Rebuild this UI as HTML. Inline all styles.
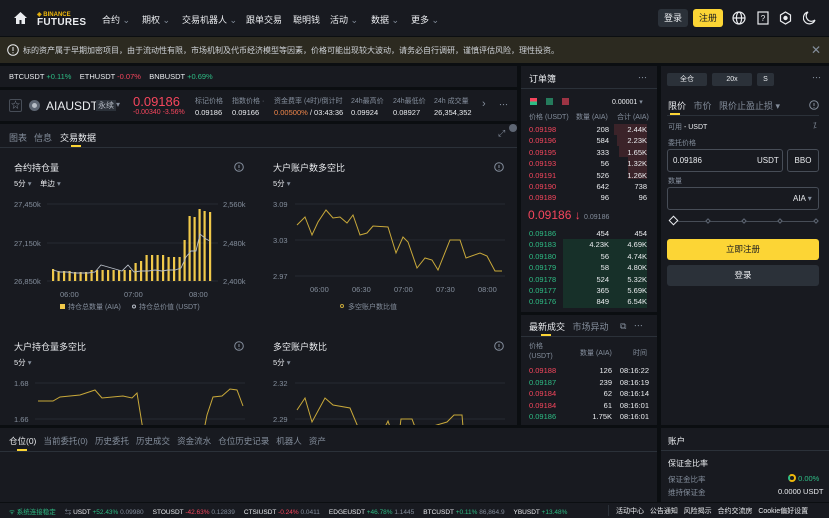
<!DOCTYPE html><html><head><meta charset="utf-8"><style>
*{margin:0;padding:0;box-sizing:border-box}
body{width:829px;height:518px;overflow:hidden;background:#0b0e11;font-family:"Liberation Sans","Noto Sans CJK SC",sans-serif;color:#eaecef;font-size:9px;position:relative}
.a{position:absolute}
.p{position:absolute;background:#181a20}
.g{color:#848e9c}.r{color:#f6465d}.gr{color:#2ebd85}.w{color:#eaecef}
.t{white-space:nowrap}
</style></head><body>
<!-- header -->
<div class="p" style="left:0;top:0;width:829px;height:36px;background:#181a20"></div>
<svg class="a" style="left:14px;top:12px" width="13" height="12" viewBox="0 0 13 12"><path d="M6.5 0L0 6h2v6h3.5V8h2v4H11V6h2z" fill="#eaecef"/></svg>
<div class="a t" style="left:37px;top:11px;font-size:6px;color:#f0b90b;font-weight:bold">◈ BINANCE</div>
<div class="a t" style="left:37px;top:17px;font-size:10px;color:#eaecef;font-weight:bold;letter-spacing:.3px">FUTURES</div>
<div class="a t" style="left:102px;top:13px;font-size:9px">合约 <span class="g">⌄</span></div>
<div class="a t" style="left:142px;top:13px;font-size:9px">期权 <span class="g">⌄</span></div>
<div class="a t" style="left:182px;top:13px;font-size:9px">交易机器人 <span class="g">⌄</span></div>
<div class="a t" style="left:246px;top:13px;font-size:9px">跟单交易</div>
<div class="a t" style="left:293px;top:13px;font-size:9px">聪明钱</div>
<div class="a t" style="left:330px;top:13px;font-size:9px">活动 <span class="g">⌄</span></div>
<div class="a t" style="left:371px;top:13px;font-size:9px">数据 <span class="g">⌄</span></div>
<div class="a t" style="left:411px;top:13px;font-size:9px">更多 <span class="g">⌄</span></div>
<div class="a" style="left:658px;top:9px;width:30px;height:18px;background:#2b3139;border-radius:3px;font-size:9px;text-align:center;line-height:18px">登录</div>
<div class="a" style="left:693px;top:9px;width:30px;height:18px;background:#fcd535;border-radius:3px;font-size:9px;color:#181a20;text-align:center;line-height:18px">注册</div>
<svg class="a" style="left:732px;top:11px" width="14" height="14" viewBox="0 0 14 14" fill="none" stroke="#eaecef" stroke-width="1.2"><circle cx="7" cy="7" r="6"/><ellipse cx="7" cy="7" rx="2.6" ry="6"/><path d="M1 7h12"/></svg>
<svg class="a" style="left:757px;top:11px" width="12" height="14" viewBox="0 0 12 14" fill="none" stroke="#eaecef" stroke-width="1.2"><rect x="1" y="1" width="10" height="12"/><text x="6" y="10" font-size="8" fill="#eaecef" stroke="none" text-anchor="middle">?</text></svg>
<svg class="a" style="left:779px;top:11px" width="13" height="14" viewBox="0 0 13 14" fill="none" stroke="#eaecef" stroke-width="1.2"><path d="M6.5 1l5 3v6l-5 3-5-3V4z"/><circle cx="6.5" cy="7" r="1.6" fill="#eaecef"/></svg>
<svg class="a" style="left:803px;top:11px" width="13" height="14" viewBox="0 0 13 14" fill="none" stroke="#eaecef" stroke-width="1.2"><path d="M5 1a6 6 0 1 0 7 8A5 5 0 0 1 5 1z"/></svg>
<!-- notice -->
<div class="a" style="left:0;top:37px;width:829px;height:26px;background:#2c2a20"></div>
<svg class="a" style="left:7px;top:44px" width="12" height="12" viewBox="0 0 12 12" fill="none" stroke="#eaecef" stroke-width="1"><circle cx="6" cy="6" r="5.3"/><path d="M6 3v4M6 8.3v.9"/></svg>
<div class="a t" style="left:23px;top:45px;font-size:8px;color:#cfd3d8">标的资产属于早期加密项目，由于流动性有限，市场机制及代币经济模型等因素，价格可能出现较大波动，请务必自行调研，谨慎评估风险，理性投资。</div>
<div class="a t g" style="left:811px;top:43px;font-size:12px">✕</div>
<!-- ticker row -->
<div class="p" style="left:0;top:66px;width:517px;height:21px"></div>
<div class="a t" style="left:9px;top:72px;font-size:7.5px">BTCUSDT <span class="gr">+0.11%</span>&nbsp;&nbsp;&nbsp; ETHUSDT <span class="r">-0.07%</span>&nbsp;&nbsp;&nbsp; BNBUSDT <span class="gr">+0.69%</span></div>
<!-- symbol bar -->
<div class="p" style="left:0;top:90px;width:517px;height:31px"></div>
<div class="a" style="left:9px;top:99px;width:13px;height:13px;border:1px solid #474d57;border-radius:2px;color:#848e9c;font-size:9px;text-align:center;line-height:11px">☆</div>
<div class="a" style="left:29px;top:100px;width:11px;height:11px;border-radius:50%;background:#b7bdc6;border:3px solid #5e6673"></div>
<div class="a t" style="left:46px;top:99px;font-size:12px">AIAUSDT</div>
<div class="a t" style="left:96px;top:100px;font-size:8px;background:#2b3139;padding:0 2px;color:#b7bdc6">永续</div>
<div class="a t g" style="left:116px;top:100px;font-size:8px">▾</div>
<div class="a t r" style="left:133px;top:94px;font-size:13px">0.09186</div>
<div class="a t r" style="left:133px;top:109px;font-size:7px">-0.00340 -3.56%</div>
<div class="a t g" style="left:195px;top:96px;font-size:7px">标记价格</div><div class="a t" style="left:195px;top:108px;font-size:7.5px">0.09186</div>
<div class="a t g" style="left:232px;top:96px;font-size:7px">指数价格 ·</div><div class="a t" style="left:232px;top:108px;font-size:7.5px">0.09166</div>
<div class="a t g" style="left:274px;top:96px;font-size:7px">资金费率 (4时)/倒计时</div><div class="a t" style="left:274px;top:108px;font-size:7.5px"><span style="color:#f0864a">0.00500%</span> / 03:43:36</div>
<div class="a t g" style="left:351px;top:96px;font-size:7px">24h最高价</div><div class="a t" style="left:351px;top:108px;font-size:7.5px">0.09924</div>
<div class="a t g" style="left:393px;top:96px;font-size:7px">24h最低价</div><div class="a t" style="left:393px;top:108px;font-size:7.5px">0.08927</div>
<div class="a t g" style="left:434px;top:96px;font-size:7px">24h 成交量</div><div class="a t" style="left:434px;top:108px;font-size:7.5px">26,354,352</div>
<div class="a t g" style="left:482px;top:98px;font-size:11px">›</div>
<div class="a t g" style="left:499px;top:98px;font-size:9px">⋯</div>
<!-- main chart panel -->
<div class="p" style="left:0;top:124px;width:517px;height:301px"></div>
<div class="a t g" style="left:9px;top:131px;font-size:9px">图表</div>
<div class="a t g" style="left:34px;top:131px;font-size:9px">信息</div>
<div class="a t" style="left:60px;top:131px;font-size:9px">交易数据</div>
<div class="a" style="left:71px;top:145px;width:10px;height:2px;background:#fcd535"></div>
<div class="a" style="left:0;top:147px;width:517px;height:1px;background:#2b3139"></div>
<div class="a t g" style="left:498px;top:128px;font-size:9px">⤢</div>
<div class="a" style="left:509px;top:124px;width:8px;height:8px;border-radius:50%;background:#5e6673"></div>
<!-- chart 1 -->
<div class="a t" style="left:14px;top:161px;font-size:9px">合约持仓量</div>
<div class="a t" style="left:14px;top:178px;font-size:7.5px">5分 <span class="g">▾</span>&nbsp;&nbsp;&nbsp; 单边 <span class="g">▾</span></div>
<svg class="a" style="left:234px;top:162px" width="10" height="10"><circle cx="5" cy="5" r="4.3" fill="none" stroke="#848e9c"/><path d="M5 3v3M5 7v.8" stroke="#848e9c"/></svg>
<svg class="a" style="left:0;top:195px" width="260" height="125">
<g stroke="#2b3139" stroke-width="0.8"><line x1="47" y1="9" x2="218" y2="9"/><line x1="47" y1="48" x2="218" y2="48"/><line x1="47" y1="86" x2="218" y2="86"/></g>
<g fill="#848e9c" font-size="7.5" font-family="Liberation Sans"><text x="14" y="12">27,450k</text><text x="14" y="51">27,150k</text><text x="14" y="89">26,850k</text><text x="223" y="12">2,560k</text><text x="223" y="51">2,480k</text><text x="223" y="89">2,400k</text><text x="60" y="102">06:00</text><text x="124" y="102">07:00</text><text x="189" y="102">08:00</text></g>
<g fill="#f0c94a">
<rect x="52" y="74" width="2.2" height="12"/><rect x="57.5" y="76" width="2.2" height="10"/><rect x="63" y="76" width="2.2" height="10"/><rect x="68.5" y="76" width="2.2" height="10"/><rect x="74" y="77" width="2.2" height="9"/><rect x="79.5" y="77" width="2.2" height="9"/><rect x="85" y="77" width="2.2" height="9"/><rect x="90.5" y="75" width="2.2" height="11"/><rect x="96" y="75" width="2.2" height="11"/><rect x="101.5" y="75" width="2.2" height="11"/><rect x="107" y="75" width="2.2" height="11"/><rect x="112.5" y="75" width="2.2" height="11"/><rect x="118" y="75" width="2.2" height="11"/><rect x="123.5" y="75" width="2.2" height="11"/><rect x="129" y="75" width="2.2" height="11"/><rect x="134.5" y="68" width="2.2" height="18"/><rect x="140" y="66" width="2.2" height="20"/><rect x="145.5" y="60" width="2.2" height="26"/><rect x="151" y="60" width="2.2" height="26"/><rect x="156.5" y="60" width="2.2" height="26"/><rect x="162" y="60" width="2.2" height="26"/><rect x="167.5" y="62" width="2.2" height="24"/><rect x="173" y="62" width="2.2" height="24"/><rect x="178.5" y="62" width="2.2" height="24"/><rect x="183.5" y="45" width="2.2" height="41"/><rect x="188.5" y="21" width="2.2" height="65"/><rect x="193.5" y="22" width="2.2" height="64"/><rect x="198.5" y="14" width="2.2" height="72"/><rect x="203.5" y="16" width="2.2" height="70"/><rect x="209" y="17" width="2.2" height="69"/></g>
<polyline fill="none" stroke="#b7bdc6" stroke-width="0.9" points="53,75 60,77 67,77 74,78 81,78 88,78 95,77 101,70 108,72 115,74 122,76 128,70 134,77 141,76 148,76 155,75 162,76 168,75 175,75 181,73 186,62 191,56 196,56 200,39 206,44 210,46"/>
<rect x="60" y="109" width="5" height="5" fill="#f0c94a"/><text x="68" y="114" fill="#848e9c" font-size="7" font-family="Liberation Sans,Noto Sans CJK SC">持仓总数量 (AIA)</text>
<circle cx="134" cy="111.5" r="1.5" fill="none" stroke="#b7bdc6"/><text x="139" y="114" fill="#848e9c" font-size="7" font-family="Liberation Sans,Noto Sans CJK SC">持仓总价值 (USDT)</text>
</svg>
<!-- chart 2 -->
<div class="a t" style="left:273px;top:161px;font-size:9px">大户账户数多空比</div>
<div class="a t" style="left:273px;top:178px;font-size:7.5px">5分 <span class="g">▾</span></div>
<svg class="a" style="left:494px;top:162px" width="10" height="10"><circle cx="5" cy="5" r="4.3" fill="none" stroke="#848e9c"/><path d="M5 3v3M5 7v.8" stroke="#848e9c"/></svg>
<svg class="a" style="left:260px;top:195px" width="260" height="125">
<g stroke="#2b3139" stroke-width="0.8"><line x1="35" y1="9" x2="245" y2="9"/><line x1="35" y1="45" x2="245" y2="45"/><line x1="35" y1="81" x2="245" y2="81"/></g>
<g fill="#848e9c" font-size="7.5" font-family="Liberation Sans"><text x="13" y="12">3.09</text><text x="13" y="48">3.03</text><text x="13" y="84">2.97</text><text x="50" y="97">06:00</text><text x="92" y="97">06:30</text><text x="134" y="97">07:00</text><text x="176" y="97">07:30</text><text x="218" y="97">08:00</text></g>
<polyline fill="none" stroke="#c9a93a" stroke-width="1" points="37,30 45,22 52,40 58,27 66,15 73,23 80,22 87,28 93,20 100,40 107,38 113,31 128,32 136,58 143,42 148,47 157,73 165,63 172,65 178,75 190,45 200,45 206,63 220,58 227,61 235,76 242,76"/>
<circle cx="82" cy="111" r="1.5" fill="none" stroke="#c9a93a"/><text x="88" y="114" fill="#848e9c" font-size="7" font-family="Liberation Sans,Noto Sans CJK SC">多空账户数比值</text>
</svg>
<!-- chart 3 -->
<div class="a t" style="left:14px;top:340px;font-size:9px">大户持仓量多空比</div>
<div class="a t" style="left:14px;top:357px;font-size:7.5px">5分 <span class="g">▾</span></div>
<svg class="a" style="left:234px;top:341px" width="10" height="10"><circle cx="5" cy="5" r="4.3" fill="none" stroke="#848e9c"/><path d="M5 3v3M5 7v.8" stroke="#848e9c"/></svg>
<svg class="a" style="left:0;top:375px" width="260" height="50">
<g stroke="#2b3139" stroke-width="0.8"><line x1="35" y1="8" x2="245" y2="8"/><line x1="35" y1="44" x2="245" y2="44"/></g>
<g fill="#848e9c" font-size="7.5" font-family="Liberation Sans"><text x="14" y="11">1.68</text><text x="14" y="47">1.66</text></g>
<polyline fill="none" stroke="#c9a93a" stroke-width="1" points="38,26 53,26 60,22 80,20 95,15 102,23 123,21 132,23 137,18 143,55"/>
<polyline fill="none" stroke="#c9a93a" stroke-width="1" points="204,55 207,40 213,22 222,21 230,14 237,15 243,31"/>
</svg>
<!-- chart 4 -->
<div class="a t" style="left:273px;top:340px;font-size:9px">多空账户数比</div>
<div class="a t" style="left:273px;top:357px;font-size:7.5px">5分 <span class="g">▾</span></div>
<svg class="a" style="left:494px;top:341px" width="10" height="10"><circle cx="5" cy="5" r="4.3" fill="none" stroke="#848e9c"/><path d="M5 3v3M5 7v.8" stroke="#848e9c"/></svg>
<svg class="a" style="left:260px;top:375px" width="260" height="50">
<g stroke="#2b3139" stroke-width="0.8"><line x1="35" y1="8" x2="245" y2="8"/><line x1="35" y1="44" x2="245" y2="44"/></g>
<g fill="#848e9c" font-size="7.5" font-family="Liberation Sans"><text x="13" y="11">2.32</text><text x="13" y="47">2.29</text></g>
<polyline fill="none" stroke="#c9a93a" stroke-width="1" points="37,35 45,23 52,47 65,23 73,30 90,33 98,52"/>
<polyline fill="none" stroke="#c9a93a" stroke-width="1" points="125,52 128,46 130,52"/>
<polyline fill="none" stroke="#c9a93a" stroke-width="1" points="140,52 141,44 152,44 155,52"/>
<polyline fill="none" stroke="#c9a93a" stroke-width="1" points="170,52 187,47 194,40 202,40 203,52"/>
</svg>
<!-- orderbook -->
<div class="p" style="left:521px;top:66px;width:136px;height:246px"></div>
<div class="a t" style="left:529px;top:72px;font-size:9px">订单簿</div>
<div class="a t g" style="left:638px;top:71px;font-size:9px">⋯</div>
<div class="a" style="left:521px;top:88px;width:136px;height:1px;background:#2b3139"></div>
<div class="a" style="left:530px;top:98px;width:7px;height:7px;background:linear-gradient(#f6465d 50%,#2ebd85 50%)"></div>
<div class="a" style="left:546px;top:98px;width:7px;height:7px;background:#2ebd85;opacity:.6"></div>
<div class="a" style="left:562px;top:98px;width:7px;height:7px;background:#f6465d;opacity:.6"></div>
<div class="a t" style="left:612px;top:98px;font-size:7px">0.00001 <span class="g">▾</span></div>
<div class="a t g" style="left:529px;top:112px;font-size:7px">价格 (USDT)</div>
<div class="a t g" style="left:576px;top:112px;font-size:7px">数量 (AIA)</div>
<div class="a t g" style="left:617px;top:112px;font-size:7px">合计 (AIA)</div>
<div class="a" style="left:614px;top:124px;width:33px;height:11px;background:#3b2329"></div>
<div class="a" style="left:617px;top:135px;width:30px;height:11px;background:#3b2329"></div>
<div class="a" style="left:619px;top:146px;width:28px;height:11px;background:#3b2329"></div>
<div class="a" style="left:628px;top:157px;width:19px;height:22px;background:#3b2329"></div>
<div style="position:absolute;left:529px;top:124px;width:118px;font-size:7.5px;line-height:11.4px">
<div style="display:flex"><span class="r" style="width:45px">0.09198</span><span style="width:35px;text-align:right">208</span><span style="width:38px;text-align:right">2.44K</span></div>
<div style="display:flex"><span class="r" style="width:45px">0.09196</span><span style="width:35px;text-align:right">584</span><span style="width:38px;text-align:right">2.23K</span></div>
<div style="display:flex"><span class="r" style="width:45px">0.09195</span><span style="width:35px;text-align:right">333</span><span style="width:38px;text-align:right">1.65K</span></div>
<div style="display:flex"><span class="r" style="width:45px">0.09193</span><span style="width:35px;text-align:right">56</span><span style="width:38px;text-align:right">1.32K</span></div>
<div style="display:flex"><span class="r" style="width:45px">0.09191</span><span style="width:35px;text-align:right">526</span><span style="width:38px;text-align:right">1.26K</span></div>
<div style="display:flex"><span class="r" style="width:45px">0.09190</span><span style="width:35px;text-align:right">642</span><span style="width:38px;text-align:right">738</span></div>
<div style="display:flex"><span class="r" style="width:45px">0.09189</span><span style="width:35px;text-align:right">96</span><span style="width:38px;text-align:right">96</span></div>
</div>
<div class="a t r" style="left:528px;top:208px;font-size:12px">0.09186 ↓ <span class="g" style="font-size:7px">0.09186</span></div>
<div class="a" style="left:563px;top:239px;width:84px;height:69px;background:#173029"></div>
<div style="position:absolute;left:529px;top:228px;width:118px;font-size:7.5px;line-height:11.4px">
<div style="display:flex"><span class="gr" style="width:45px">0.09186</span><span style="width:35px;text-align:right">454</span><span style="width:38px;text-align:right">454</span></div>
<div style="display:flex"><span class="gr" style="width:45px">0.09183</span><span style="width:35px;text-align:right">4.23K</span><span style="width:38px;text-align:right">4.69K</span></div>
<div style="display:flex"><span class="gr" style="width:45px">0.09180</span><span style="width:35px;text-align:right">56</span><span style="width:38px;text-align:right">4.74K</span></div>
<div style="display:flex"><span class="gr" style="width:45px">0.09179</span><span style="width:35px;text-align:right">58</span><span style="width:38px;text-align:right">4.80K</span></div>
<div style="display:flex"><span class="gr" style="width:45px">0.09178</span><span style="width:35px;text-align:right">524</span><span style="width:38px;text-align:right">5.32K</span></div>
<div style="display:flex"><span class="gr" style="width:45px">0.09177</span><span style="width:35px;text-align:right">365</span><span style="width:38px;text-align:right">5.69K</span></div>
<div style="display:flex"><span class="gr" style="width:45px">0.09176</span><span style="width:35px;text-align:right">849</span><span style="width:38px;text-align:right">6.54K</span></div>
</div>
<!-- trades -->
<div class="p" style="left:521px;top:315px;width:136px;height:110px"></div>
<div class="a t" style="left:529px;top:320px;font-size:9px">最新成交&nbsp;&nbsp; <span class="g">市场异动</span></div>
<div class="a" style="left:541px;top:334px;width:10px;height:2px;background:#fcd535"></div>
<div class="a t g" style="left:620px;top:319px;font-size:9px">⧉&nbsp;&nbsp; ⋯</div>
<div class="a" style="left:521px;top:336px;width:136px;height:1px;background:#2b3139"></div>
<div class="a g" style="left:529px;top:342px;font-size:7px;line-height:10px">价格<br>(USDT)</div>
<div class="a t g" style="left:580px;top:348px;font-size:7px">数量 (AIA)</div>
<div class="a t g" style="left:633px;top:348px;font-size:7px">时间</div>
<div style="position:absolute;left:529px;top:365px;width:120px;font-size:7.5px;line-height:11.5px">
<div style="display:flex"><span class="r" style="width:45px">0.09188</span><span style="width:38px;text-align:right">126</span><span style="width:37px;text-align:right">08:16:22</span></div>
<div style="display:flex"><span class="gr" style="width:45px">0.09187</span><span style="width:38px;text-align:right">239</span><span style="width:37px;text-align:right">08:16:19</span></div>
<div style="display:flex"><span class="r" style="width:45px">0.09184</span><span style="width:38px;text-align:right">62</span><span style="width:37px;text-align:right">08:16:14</span></div>
<div style="display:flex"><span class="r" style="width:45px">0.09184</span><span style="width:38px;text-align:right">61</span><span style="width:37px;text-align:right">08:16:01</span></div>
<div style="display:flex"><span class="gr" style="width:45px">0.09186</span><span style="width:38px;text-align:right">1.75K</span><span style="width:37px;text-align:right">08:16:01</span></div>
</div>
<!-- trade panel -->
<div class="p" style="left:661px;top:66px;width:168px;height:359px"></div>
<div class="a" style="left:667px;top:73px;width:40px;height:13px;background:#2b3139;border-radius:2px;font-size:7px;text-align:center;line-height:13px">全仓</div>
<div class="a" style="left:712px;top:73px;width:40px;height:13px;background:#2b3139;border-radius:2px;font-size:7px;text-align:center;line-height:13px">20x</div>
<div class="a" style="left:757px;top:73px;width:17px;height:13px;background:#2b3139;border-radius:2px;font-size:7px;text-align:center;line-height:13px">S</div>
<div class="a t g" style="left:812px;top:71px;font-size:9px">⋯</div>
<div class="a t" style="left:668px;top:99px;font-size:9px">限价&nbsp;&nbsp; <span class="g">市价&nbsp;&nbsp; 限价止盈止损 ▾</span></div>
<div class="a" style="left:670px;top:113px;width:10px;height:2px;background:#fcd535"></div>
<div class="a" style="left:667px;top:115px;width:152px;height:1px;background:#2b3139"></div>
<svg class="a" style="left:809px;top:100px" width="10" height="10"><circle cx="5" cy="5" r="4.3" fill="none" stroke="#848e9c"/><path d="M5 3v3M5 7v.8" stroke="#848e9c"/></svg>
<div class="a t g" style="left:668px;top:122px;font-size:7px">可用 <span class="w">- USDT</span></div>
<div class="a t g" style="left:813px;top:121px;font-size:8px">⁒</div>
<div class="a t g" style="left:668px;top:138px;font-size:7px">委托价格</div>
<div class="a" style="left:667px;top:149px;width:116px;height:23px;border:1px solid #474d57;border-radius:3px"></div>
<div class="a t" style="left:673px;top:156px;font-size:8px">0.09186</div>
<div class="a t" style="left:757px;top:156px;font-size:8px">USDT</div>
<div class="a" style="left:787px;top:149px;width:32px;height:23px;border:1px solid #474d57;border-radius:3px;font-size:8px;text-align:center;line-height:21px">BBO</div>
<div class="a t g" style="left:668px;top:176px;font-size:7px">数量</div>
<div class="a" style="left:667px;top:187px;width:152px;height:23px;border:1px solid #474d57;border-radius:3px"></div>
<div class="a t" style="left:793px;top:194px;font-size:8px">AIA <span class="g">▾</span></div>
<div class="a" style="left:672px;top:221px;width:144px;height:1px;background:#474d57"></div>
<div class="a" style="left:670px;top:217px;width:7px;height:7px;border:1.2px solid #eaecef;transform:rotate(45deg);background:#181a20"></div>
<div class="a" style="left:706px;top:219px;width:4px;height:4px;border:1px solid #5e6673;transform:rotate(45deg);background:#181a20"></div>
<div class="a" style="left:742px;top:219px;width:4px;height:4px;border:1px solid #5e6673;transform:rotate(45deg);background:#181a20"></div>
<div class="a" style="left:778px;top:219px;width:4px;height:4px;border:1px solid #5e6673;transform:rotate(45deg);background:#181a20"></div>
<div class="a" style="left:814px;top:219px;width:4px;height:4px;border:1px solid #5e6673;transform:rotate(45deg);background:#181a20"></div>
<div class="a" style="left:667px;top:239px;width:152px;height:21px;background:#fcd535;border-radius:3px;color:#181a20;font-size:8.5px;text-align:center;line-height:21px">立即注册</div>
<div class="a" style="left:667px;top:265px;width:152px;height:21px;background:#2b3139;border-radius:3px;font-size:8.5px;text-align:center;line-height:21px">登录</div>
<!-- positions -->
<div class="p" style="left:0;top:428px;width:657px;height:74px"></div>
<div class="a t" style="left:9px;top:435px;font-size:8.5px">仓位(0)&nbsp;&nbsp; <span class="g">当前委托(0)&nbsp;&nbsp; 历史委托&nbsp;&nbsp; 历史成交&nbsp;&nbsp; 资金流水&nbsp;&nbsp; 仓位历史记录&nbsp;&nbsp; 机器人&nbsp;&nbsp; 资产</span></div>
<div class="a" style="left:17px;top:449px;width:10px;height:2px;background:#fcd535"></div>
<div class="a" style="left:0;top:451px;width:657px;height:1px;background:#2b3139"></div>
<!-- account -->
<div class="p" style="left:661px;top:428px;width:168px;height:74px"></div>
<div class="a t" style="left:668px;top:435px;font-size:8.5px">账户</div>
<div class="a" style="left:661px;top:450px;width:168px;height:1px;background:#2b3139"></div>
<div class="a t" style="left:668px;top:458px;font-size:8px">保证金比率</div>
<div class="a t g" style="left:668px;top:474px;font-size:7.5px">保证金比率</div>
<div class="a t gr" style="left:788px;top:474px;font-size:7.5px"><span style="display:inline-block;width:8px;height:8px;border-radius:50%;border:2px solid #f0b90b;border-left-color:#2ebd85;vertical-align:-1px"></span> 0.00%</div>
<div class="a t g" style="left:668px;top:487px;font-size:7.5px">维持保证金</div>
<div class="a t" style="left:778px;top:487px;font-size:7.5px">0.0000 USDT</div>
<!-- footer -->
<div class="a" style="left:0;top:503px;width:829px;height:15px;background:#181a20"></div>
<div class="a t" style="left:9px;top:506px;font-size:6.5px;width:598px;overflow:hidden"><span class="gr">ᯤ 系统连接稳定</span>&nbsp;&nbsp;&nbsp;&nbsp; <span class="g">⇆</span> USDT <span class="gr">+52.43%</span> <span class="g">0.09980</span>&nbsp;&nbsp;&nbsp;&nbsp; STOUSDT <span class="r">-42.63%</span> <span class="g">0.12839</span>&nbsp;&nbsp;&nbsp;&nbsp; CTSIUSDT <span class="r">-0.24%</span> <span class="g">0.0411</span>&nbsp;&nbsp;&nbsp;&nbsp; EDGEUSDT <span class="gr">+46.78%</span> <span class="g">1.1445</span>&nbsp;&nbsp;&nbsp;&nbsp; BTCUSDT <span class="gr">+0.11%</span> <span class="g">86,864.9</span>&nbsp;&nbsp;&nbsp;&nbsp; YBUSDT <span class="gr">+13.48%</span></div>
<div class="a" style="left:608px;top:505px;width:1px;height:11px;background:#2b3139"></div>
<div class="a t" style="left:616px;top:506px;font-size:7px">活动中心&nbsp;&nbsp; 公告通知&nbsp;&nbsp; 风险揭示&nbsp;&nbsp; 合约交流房&nbsp;&nbsp; Cookie偏好设置</div>
</body></html>
